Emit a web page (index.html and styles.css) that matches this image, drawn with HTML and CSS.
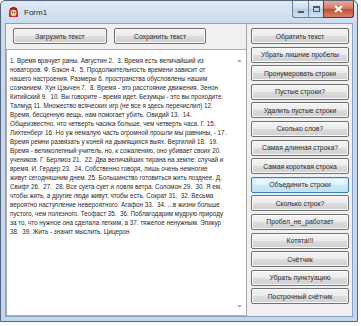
FILE: index.html
```html
<!DOCTYPE html>
<html lang="ru">
<head>
    <meta charset="UTF-8">
    <title>Form1</title>
    <link rel="stylesheet" href="styles.css">
</head>
<body>
    <div class="window">
        <div class="titlebar">
            <svg class="app-icon" width="11" height="12" viewBox="0 0 11 12">
                <path d="M1 7 Q1 1 5.5 1 Q10 1 10 7 L10 11 L1 11 Z" fill="#c8261c"/>
                <ellipse cx="5.5" cy="7" rx="3" ry="3.2" fill="#f3c9a0"/>
                <circle cx="4.4" cy="6.5" r="0.6" fill="#222"/>
                <circle cx="6.6" cy="6.5" r="0.6" fill="#222"/>
                <path d="M2 3 Q5.5 0 9 3" stroke="#7a1208" stroke-width="1" fill="none"/>
            </svg>
            <span class="title">Form1</span>
            <div class="caption-buttons">
                <div class="cap-btn cap-min"><span class="min-glyph"></span></div>
                <div class="cap-btn cap-max"><span class="max-glyph"></span></div>
                <div class="cap-btn cap-close">
                    <svg width="9" height="8" viewBox="0 0 9 8">
                        <path d="M1 1 L8 7 M8 1 L1 7" stroke="#fff" stroke-width="2"/>
                    </svg>
                </div>
            </div>
        </div>

        <div class="client">
            <div class="left-panel">
                <div class="file-buttons">
                    <button class="btn btn-load">Загрузить текст</button>
                    <button class="btn btn-save">Сохранить текст</button>
                </div>
                <div class="textbox">
                    <div class="text">1. Время врачует раны. Августин 2.&nbsp; 3. Время есть величайший из<br>новаторов. Ф. Бэкон 4.&nbsp; 5. Продолжительность времени зависит от<br>нашего настроения. Размеры 6. пространства обусловлены нашим<br>сознанием. Хун Цзычен 7.&nbsp; 8. Время - это расстояние движения. Зенон<br>Китийский 9.&nbsp; 10. Вы говорите - время идет. Безумцы - это вы проходите.<br>Талмуд 11. Множество всяческих игр (не все я здесь перечислил) 12.<br>Время, бесценную вещь, нам помогает убить. Овидий 13.&nbsp; 14.<br>Общеизвестно, что четверть часика больше, чем четверть часа. Г. 15.<br>Лихтенберг 16. Но уж немалую часть огромной прошли мы равнины, - 17.<br>Время ремни развязать у коней на дымящихся выях. Вергилий 18.&nbsp; 19.<br>Время - великолепный учитель, но, к сожалению, оно убивает своих 20.<br>учеников. Г. Берлиоз 21.&nbsp; 22. Два величайших тирана на земле: случай и<br>время. И. Гердер 23.&nbsp; 24. Собственно говоря, лишь очень немногие<br>живут сегодняшним днем. 25. Большинство готовиться жить позднее. Д.<br>Свифт 26.&nbsp; 27.&nbsp; 28. Все суета сует и ловля ветра. Соломон 29.&nbsp; 30. Я ем,<br>чтобы жить, а другие люди живут, чтобы есть. Сократ 31.&nbsp; 32. Весьма<br>вероятно наступление невероятного. Агафон 33.&nbsp; 34. ...в жизни больше<br>пустого, чем полезного. Теофаст 35.&nbsp; 36. Поблагодарим мудрую природу<br>за то, что нужное она сделала легким, а 37. тяжелое ненужным. Эпикур<br>38.&nbsp; 39. Жить - значит мыслить. Цицерон</div>
                    <div class="scrollbar">
                        <svg width="5" height="3" viewBox="0 0 5 3"><path d="M0 3 L2.5 0 L5 3 Z" fill="#b4b4b4"/></svg>
                        <svg width="5" height="3" viewBox="0 0 5 3"><path d="M0 0 L2.5 3 L5 0 Z" fill="#b4b4b4"/></svg>
                    </div>
                </div>
            </div>

            <div class="right-panel">
                <button class="btn">Обратить текст</button>
                <button class="btn">Убрать лишние пробелы</button>
                <button class="btn">Пронумеровать строки</button>
                <button class="btn">Пустые строки?</button>
                <button class="btn">Удалить пустые строки</button>
                <button class="btn">Сколько слов?</button>
                <button class="btn">Самая длинная строка?</button>
                <button class="btn">Самая короткая строка</button>
                <button class="btn btn-focus">Объединить строки</button>
                <button class="btn">Сколько строк?</button>
                <button class="btn">Пробел_не_работает</button>
                <button class="btn">Котята!!!</button>
                <button class="btn">Счётчик</button>
                <button class="btn">Убрать пунктуацию</button>
                <button class="btn">Построчный счётчик</button>
            </div>
        </div>
    </div>
</body>
</html>
```

FILE: styles.css
```css
* {
    margin: 0;
    padding: 0;
    box-sizing: border-box;
}

body {
    background: #ffffff;
    font-family: "Liberation Sans", Arial, sans-serif;
}

.window {
    width: 358px;
    height: 322px;
    border: 1px solid #56657a;
    border-radius: 5px 5px 0 0;
    background: linear-gradient(to bottom, #dfe9f5 0px, #c9daef 24px, #c4d6ee 100%);
    display: flex;
    flex-direction: column;
    padding: 0 4px 4px 4px;
}

.titlebar {
    height: 22px;
    display: flex;
    align-items: center;
    padding-left: 3px;
}

.app-icon {
    margin-right: 5px;
}

.title {
    font-size: 8px;
    color: #2a2a2a;
}

.caption-buttons {
    margin-left: auto;
    align-self: flex-start;
    display: flex;
    margin-right: -1px;
}

.cap-btn {
    height: 17px;
    border: 1px solid #6e7f98;
    border-top: none;
    display: flex;
    align-items: center;
    justify-content: center;
}

.cap-min {
    width: 16px;
    border-radius: 0 0 0 3px;
    border-right: none;
    background: linear-gradient(to bottom, #e9f0f9, #cad9ec 50%, #b9cce4 50%, #d2e1f2);
}

.cap-max {
    width: 15px;
    border-right: none;
    background: linear-gradient(to bottom, #e9f0f9, #cad9ec 50%, #b9cce4 50%, #d2e1f2);
}

.min-glyph {
    width: 6px;
    height: 2px;
    margin-top: 5px;
    background: #4a5a70;
}

.max-glyph {
    width: 7px;
    height: 6px;
    border: 1px solid #4a5a70;
    border-top-width: 2px;
}

.cap-close {
    width: 31px;
    border-radius: 0 0 3px 0;
    border-color: #7a2a20;
    background: linear-gradient(to bottom, #e9a99c, #d4735f 50%, #c24a33 50%, #d6826b);
}

.client {
    flex: 1;
    background: #f0f0f0;
    border: 1px solid #8ea2bd;
    display: flex;
}

.left-panel {
    width: 241px;
    display: flex;
    flex-direction: column;
}

.file-buttons {
    display: flex;
    gap: 7px;
    padding: 4px 0 0 7px;
}

.btn {
    height: 16px;
    border: 1px solid #707070;
    border-radius: 2px;
    background: linear-gradient(to bottom, #f4f4f4 0%, #ebebeb 50%, #dddddd 50%, #cfcfcf 100%);
    box-shadow: inset 0 0 0 1px #fafafa;
    font-family: "Liberation Sans", Arial, sans-serif;
    font-size: 6.8px;
    color: #2a2a2a;
    text-align: center;
}

.btn-load {
    width: 94px;
}

.btn-save {
    width: 92px;
}

.btn-focus {
    border-color: #3c7fb1;
    background: linear-gradient(to bottom, #eef8fe 0%, #dff2fd 50%, #cde9fa 50%, #bde0f5 100%);
    box-shadow: inset 0 0 0 1px #c6e6fb;
}

.textbox {
    flex: 1;
    margin-top: 5px;
    background: #ffffff;
    border: 1px solid #abadb3;
    border-right: none;
    display: flex;
}

.text {
    flex: 1;
    padding: 6px 0 0 3px;
    font-size: 6.3px;
    line-height: 9px;
    color: #2a2a2a;
    white-space: nowrap;
    overflow: hidden;
}

.scrollbar {
    width: 13px;
    display: flex;
    flex-direction: column;
    justify-content: space-between;
    align-items: center;
    padding: 9px 0 7px 0;
}

.right-panel {
    flex: 1;
    border-left: 1px solid #a8a8a8;
    display: flex;
    flex-direction: column;
    gap: 2.6px;
    padding: 4px 3px 0 4px;
}

.right-panel .btn {
    width: 98px;
}
```
